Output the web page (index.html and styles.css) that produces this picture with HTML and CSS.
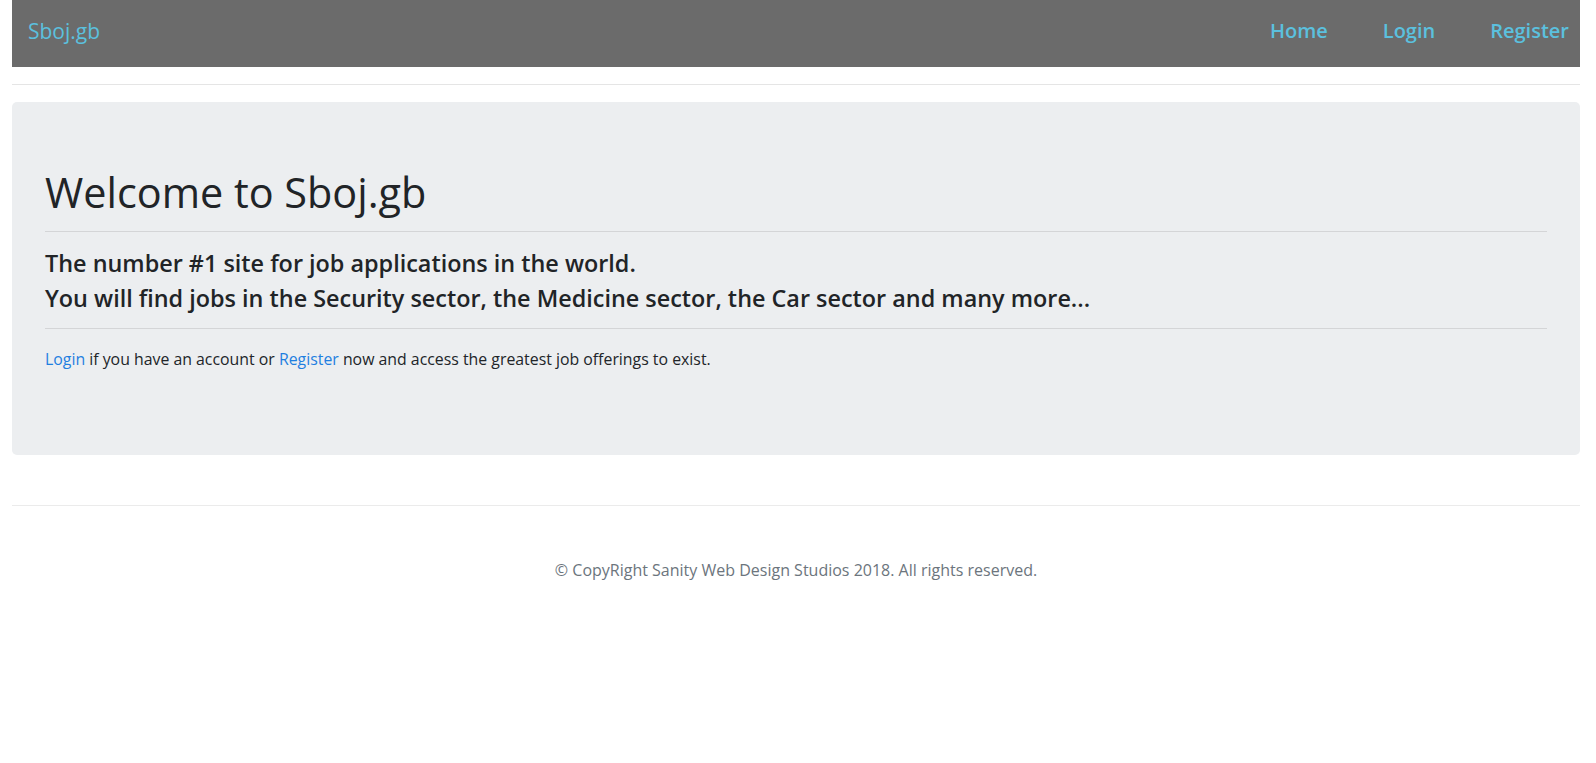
FILE: index.html
```html
<!DOCTYPE html>
<html lang="en">
<head>
<meta charset="utf-8">
<title>Sboj.gb</title>
<link rel="stylesheet" href="styles.css">
</head>
<body>
<div class="page">
  <nav class="navbar">
    <a class="brand" href="#">Sboj.gb</a>
    <ul class="nav-links">
      <li><a href="#">Home</a></li>
      <li><a href="#">Login</a></li>
      <li><a href="#">Register</a></li>
    </ul>
  </nav>
  <hr class="rule rule-top">
  <main class="jumbotron">
    <h1 class="title">Welcome to Sboj.gb</h1>
    <hr class="rule rule-inner rule-a">
    <h4 class="lead">The number #1 site for job applications in the world.<br>You will find jobs in the Security sector, the Medicine sector, the Car sector and many more...</h4>
    <hr class="rule rule-inner rule-b">
    <p class="text"><a href="#">Login</a> if you have an account or <a href="#">Register</a> now and access the greatest job offerings to exist.</p>
  </main>
  <hr class="rule rule-footer">
  <footer class="footer">
    <p>&copy; CopyRight Sanity Web Design Studios 2018. All rights reserved.</p>
  </footer>
</div>
</body>
</html>
```
FILE: styles.css
```css
* { box-sizing: border-box; }
html, body { margin: 0; padding: 0; background: #fff; }
body {
  font-family: "Open Sans", "Noto Sans", "Liberation Sans", sans-serif;
  color: #212529;
}
a { text-decoration: none; }

.page {
  display: flex;
  flex-direction: column;
  padding: 0 16px 0 12px;
}

.navbar {
  display: flex;
  justify-content: space-between;
  align-items: flex-start;
  height: 67px;
  padding: 16px 11px 0 16px;
  background: #6b6b6b;
}
.brand {
  font-size: 21px;
  line-height: 30px;
  font-weight: 500;
  color: #5bc0de;
}
.nav-links {
  display: flex;
  gap: 55px;
  margin: 0;
  padding: 0;
  list-style: none;
}
.nav-links a {
  font-size: 20px;
  line-height: 30px;
  font-weight: 600;
  color: #5bc0de;
}

.rule {
  border: 0;
  height: 1px;
  margin: 0;
  background: rgba(0, 0, 0, 0.1);
}
.rule-top { margin-top: 17px; }

.jumbotron {
  margin-top: 17px;
  padding: 65px 33px 84px 33px;
  background: #eceef0;
  border-radius: 5px;
}
.title {
  margin: 0;
  font-size: 41.4px;
  line-height: 50px;
  font-weight: 400;
  color: #212427;
}
.rule-a { margin-top: 14px; }
.lead {
  margin: 14px 0 0 0;
  font-size: 23.4px;
  line-height: 35px;
  font-weight: 600;
  color: #212427;
}
.rule-b { margin-top: 12px; }
.text {
  margin: 18px 0 0 0;
  font-size: 15.85px;
  line-height: 24px;
  color: #212529;
}
.text a { color: #1f7fe0; }

.rule-footer { margin-top: 50px; background: rgba(0, 0, 0, 0.08); }
.footer {
  margin-top: 52px;
  text-align: center;
}
.footer p {
  margin: 0;
  font-size: 16px;
  line-height: 24px;
  color: #6c757d;
}
```
